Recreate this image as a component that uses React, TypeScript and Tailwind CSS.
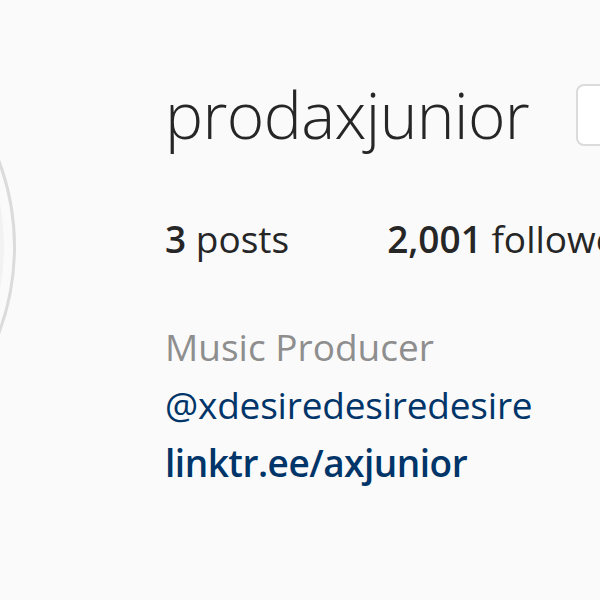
import React from "react";

export default function App() {
  return (
    <div
      className="w-[600px] h-[600px] overflow-hidden bg-[#fafafa] flex"
      style={{ fontFamily: '"Open Sans", "Noto Sans", sans-serif' }}
    >
      <div className="shrink-0 ml-[-478px] w-[494px] h-[494px] rounded-full border-[3px] border-[#dbdbdb] flex items-center justify-center">
        <div className="w-[470px] h-[470px] rounded-full bg-[#f2f2f2]" />
      </div>
      <div className="ml-[149px] flex flex-col shrink-0">
        <div className="flex items-center mt-[84px] h-[62px]">
          <h1 className="text-[64px] leading-[62px] font-light text-[#262626] tracking-[-0.6px] whitespace-nowrap">
            prodaxjunior
          </h1>
          <div className="ml-[47px] w-[160px] h-[62px] rounded-[8px] border-[2px] border-[#dbdbdb] bg-white shrink-0" />
        </div>
        <div className="flex mt-[69px] text-[37px] leading-[48px] text-[#262626] whitespace-nowrap">
          <span>
            <span className="font-semibold">3</span> posts
          </span>
          <span className="ml-[98px]">
            <span className="font-semibold">2,001</span> followers
          </span>
        </div>
        <div className="mt-[55px] flex flex-col text-[37px] leading-[58px] whitespace-nowrap">
          <span className="text-[#8e8e8e]">Music Producer</span>
          <span className="text-[#003569] tracking-[-0.2px]">@xdesiredesiredesire</span>
          <span className="text-[#003569] font-semibold tracking-[-0.5px]">linktr.ee/axjunior</span>
        </div>
      </div>
    </div>
  );
}
